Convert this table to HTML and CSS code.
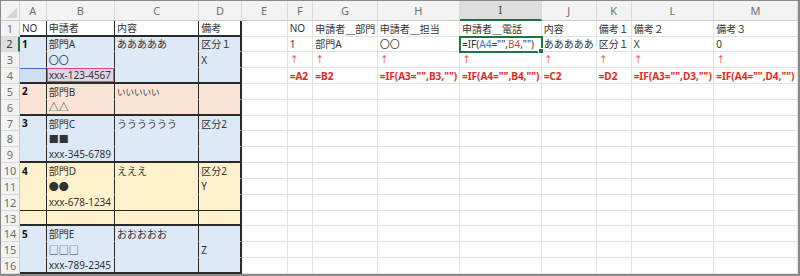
FILE: index.html
```html
<!DOCTYPE html>
<html lang="ja">
<head>
<meta charset="utf-8">
<link rel="stylesheet" href="styles.css">
</head>
<body>
<div class="frame">
<div class="sheet">
  <!-- column headers -->
  <div class="corner"><div class="tri"></div></div>
  <div class="ch">A</div><div class="ch">B</div><div class="ch">C</div><div class="ch">D</div><div class="ch">E</div><div class="ch">F</div><div class="ch">G</div><div class="ch">H</div><div class="ch sel">I</div><div class="ch">J</div><div class="ch">K</div><div class="ch">L</div><div class="ch">M</div>

  <!-- row 1 -->
  <div class="rh">1</div>
  <div class="c bR bB2">NO</div>
  <div class="c bR bB2">申請者</div>
  <div class="c bR bB2">内容</div>
  <div class="c bR2 bB2">備考</div>
  <div class="c"></div>
  <div class="c">NO</div>
  <div class="c">申請者＿部門</div>
  <div class="c">申請者＿担当</div>
  <div class="c">申請者＿電話</div>
  <div class="c">内容</div>
  <div class="c">備考１</div>
  <div class="c">備考２</div>
  <div class="c">備考３</div>

  <!-- row 2 -->
  <div class="rh rsel">2</div>
  <div class="c fb bR b">1</div>
  <div class="c fb bR">部門A</div>
  <div class="c fb bR">あああああ</div>
  <div class="c fb bR2">区分１</div>
  <div class="c"></div>
  <div class="c">1</div>
  <div class="c">部門A</div>
  <div class="c">〇〇</div>
  <div class="c act">=IF(<span class="rb">A4</span>="",<span class="rr">B4</span>,"")</div>
  <div class="c">あああああ</div>
  <div class="c">区分１</div>
  <div class="c">X</div>
  <div class="c">0</div>

  <!-- row 3 -->
  <div class="rh">3</div>
  <div class="c fb bR"></div>
  <div class="c fb bR">〇〇</div>
  <div class="c fb bR"></div>
  <div class="c fb bR2">X</div>
  <div class="c"></div>
  <div class="c arr">↑</div>
  <div class="c arr">↑</div>
  <div class="c arr">↑</div>
  <div class="c arr">↑</div>
  <div class="c arr">↑</div>
  <div class="c arr">↑</div>
  <div class="c arr">↑</div>
  <div class="c arr">↑</div>

  <!-- row 4 -->
  <div class="rh">4</div>
  <div class="c fb bR bB2 hiA"></div>
  <div class="c fb bR bB2 hiB">xxx-123-4567</div>
  <div class="c fb bR bB2"></div>
  <div class="c fb bR2 bB2"></div>
  <div class="c"></div>
  <div class="c red">=A2</div>
  <div class="c red">=B2</div>
  <div class="c red">=IF(A3="",B3,"")</div>
  <div class="c red">=IF(A4="",B4,"")</div>
  <div class="c red">=C2</div>
  <div class="c red">=D2</div>
  <div class="c red">=IF(A3="",D3,"")</div>
  <div class="c red">=IF(A4="",D4,"")</div>

  <!-- row 5 -->
  <div class="rh">5</div>
  <div class="c fo bR b">2</div>
  <div class="c fo bR">部門B</div>
  <div class="c fo bR sm">いいいいい</div>
  <div class="c fo bR2"></div>
  <div class="c"></div><div class="c"></div><div class="c"></div><div class="c"></div><div class="c"></div><div class="c"></div><div class="c"></div><div class="c"></div><div class="c"></div>

  <!-- row 6 -->
  <div class="rh">6</div>
  <div class="c fo bR bB2"></div>
  <div class="c fo bR bB2">△△</div>
  <div class="c fo bR bB2"></div>
  <div class="c fo bR2 bB2"></div>
  <div class="c"></div><div class="c"></div><div class="c"></div><div class="c"></div><div class="c"></div><div class="c"></div><div class="c"></div><div class="c"></div><div class="c"></div>

  <!-- row 7 -->
  <div class="rh">7</div>
  <div class="c fb bR b">3</div>
  <div class="c fb bR">部門C</div>
  <div class="c fb bR">うううううう</div>
  <div class="c fb bR2">区分2</div>
  <div class="c"></div><div class="c"></div><div class="c"></div><div class="c"></div><div class="c"></div><div class="c"></div><div class="c"></div><div class="c"></div><div class="c"></div>

  <!-- row 8 -->
  <div class="rh">8</div>
  <div class="c fb bR"></div>
  <div class="c fb bR">■■</div>
  <div class="c fb bR"></div>
  <div class="c fb bR2"></div>
  <div class="c"></div><div class="c"></div><div class="c"></div><div class="c"></div><div class="c"></div><div class="c"></div><div class="c"></div><div class="c"></div><div class="c"></div>

  <!-- row 9 -->
  <div class="rh">9</div>
  <div class="c fb bR bB2"></div>
  <div class="c fb bR bB2">xxx-345-6789</div>
  <div class="c fb bR bB2"></div>
  <div class="c fb bR2 bB2"></div>
  <div class="c"></div><div class="c"></div><div class="c"></div><div class="c"></div><div class="c"></div><div class="c"></div><div class="c"></div><div class="c"></div><div class="c"></div>

  <!-- row 10 -->
  <div class="rh">10</div>
  <div class="c fy bR b">4</div>
  <div class="c fy bR">部門D</div>
  <div class="c fy bR">えええ</div>
  <div class="c fy bR2">区分2</div>
  <div class="c"></div><div class="c"></div><div class="c"></div><div class="c"></div><div class="c"></div><div class="c"></div><div class="c"></div><div class="c"></div><div class="c"></div>

  <!-- row 11 -->
  <div class="rh">11</div>
  <div class="c fy bR"></div>
  <div class="c fy bR">●●</div>
  <div class="c fy bR"></div>
  <div class="c fy bR2">Y</div>
  <div class="c"></div><div class="c"></div><div class="c"></div><div class="c"></div><div class="c"></div><div class="c"></div><div class="c"></div><div class="c"></div><div class="c"></div>

  <!-- row 12 -->
  <div class="rh">12</div>
  <div class="c fy bR bB1"></div>
  <div class="c fy bR bB1">xxx-678-1234</div>
  <div class="c fy bR bB1"></div>
  <div class="c fy bR2 bB1"></div>
  <div class="c"></div><div class="c"></div><div class="c"></div><div class="c"></div><div class="c"></div><div class="c"></div><div class="c"></div><div class="c"></div><div class="c"></div>

  <!-- row 13 -->
  <div class="rh">13</div>
  <div class="c fy bR bB2"></div>
  <div class="c fy bR bB2"></div>
  <div class="c fy bR bB2"></div>
  <div class="c fy bR2 bB2"></div>
  <div class="c"></div><div class="c"></div><div class="c"></div><div class="c"></div><div class="c"></div><div class="c"></div><div class="c"></div><div class="c"></div><div class="c"></div>

  <!-- row 14 -->
  <div class="rh">14</div>
  <div class="c fb bR b">5</div>
  <div class="c fb bR">部門E</div>
  <div class="c fb bR">おおおおお</div>
  <div class="c fb bR2"></div>
  <div class="c"></div><div class="c"></div><div class="c"></div><div class="c"></div><div class="c"></div><div class="c"></div><div class="c"></div><div class="c"></div><div class="c"></div>

  <!-- row 15 -->
  <div class="rh">15</div>
  <div class="c fb bR"></div>
  <div class="c fb bR">□□□</div>
  <div class="c fb bR"></div>
  <div class="c fb bR2">Z</div>
  <div class="c"></div><div class="c"></div><div class="c"></div><div class="c"></div><div class="c"></div><div class="c"></div><div class="c"></div><div class="c"></div><div class="c"></div>

  <!-- row 16 -->
  <div class="rh">16</div>
  <div class="c fb bR bB2"></div>
  <div class="c fb bR bB2">xxx-789-2345</div>
  <div class="c fb bR bB2"></div>
  <div class="c fb bR2 bB2"></div>
  <div class="c"></div><div class="c"></div><div class="c"></div><div class="c"></div><div class="c"></div><div class="c"></div><div class="c"></div><div class="c"></div><div class="c"></div>
</div>
</div>
</body>
</html>
```

FILE: styles.css
```css
html, body {
  margin: 0;
  padding: 0;
  background: #ffffff;
}

.frame {
  width: 800px;
  height: 276px;
  box-sizing: border-box;
  border: 1px solid #8a8a8a;
  border-right-width: 2px;
  border-bottom-width: 2px;
  overflow: hidden;
  background: #ffffff;
}

.sheet {
  display: grid;
  grid-template-columns: 19px 26.7px 68.3px 84.3px 42.4px 46px 25.6px 64.4px 82.3px 81.7px 55px 35px 82.6px 83.7px;
  grid-template-rows: 19.7px repeat(16, 15.83px);
  font-family: "Noto Sans", "Noto Sans CJK JP", sans-serif;
  font-size: 10px;
  color: #333333;
}

.corner {
  background: #f3f3f3;
  border-right: 1px solid #d4d4d4;
  border-bottom: 1px solid #c8c8c8;
  box-sizing: border-box;
  display: flex;
  justify-content: flex-end;
  align-items: flex-end;
  padding: 0 2px 2px 0;
}

.tri {
  width: 11px;
  height: 11px;
  background: linear-gradient(to top left, #d6d6d6 50%, rgba(214, 214, 214, 0) 50%);
}

.ch {
  background: #f3f3f3;
  border-right: 1px solid #dadada;
  border-bottom: 1px solid #c8c8c8;
  box-sizing: border-box;
  display: flex;
  align-items: center;
  justify-content: center;
  color: #6e6e6e;
  font-size: 11px;
}

.ch.sel {
  background: #dedede;
  color: #3f3f3f;
  border-bottom: 2px solid #217346;
}

.rh {
  background: #f3f3f3;
  border-right: 1px solid #c8c8c8;
  border-bottom: 1px solid #dadada;
  box-sizing: border-box;
  display: flex;
  align-items: center;
  justify-content: center;
  color: #6e6e6e;
  font-size: 11px;
}

.rh.rsel {
  background: #dedede;
  color: #3f3f3f;
  border-right: 2px solid #217346;
}

.c {
  box-sizing: border-box;
  border-right: 1px solid #e2e2e2;
  border-bottom: 1px solid #e2e2e2;
  display: flex;
  align-items: center;
  padding-left: 2px;
  white-space: nowrap;
  overflow: hidden;
  position: relative;
}

.fb { background: #dde9f6; border-color: #dde9f6; }
.fo { background: #fbe3d6; border-color: #fbe3d6; }
.fy { background: #fff1cb; border-color: #fff1cb; }

.bR { border-right: 1px solid #2a2a2a; }
.bR2 { border-right: 2px solid #2a2a2a; }
.bB2 { border-bottom: 2px solid #2a2a2a; }
.bB1 { border-bottom: 1px solid #2a2a2a; }

.b {
  font-weight: 700;
  color: #111111;
}

.sm {
  font-size: 8.5px;
}

.arr {
  color: #e0423c;
  font-size: 9px;
}

.red {
  color: #e02a26;
  font-weight: 700;
}

.hiA {
  background: #cfdff2;
  box-shadow: inset 0 1px 0 #3d6fc4;
}

.hiB {
  background: #dcd6e7;
  box-shadow: inset 0 0 0 1px #e0506a;
}

.act {
  overflow: visible;
  outline: 2px solid #217346;
  outline-offset: -1px;
  z-index: 2;
  color: #333333;
}

.act::after {
  content: "";
  position: absolute;
  right: -3px;
  bottom: -3px;
  width: 4px;
  height: 4px;
  background: #217346;
  border: 1px solid #ffffff;
}

.rb { color: #4472c4; }
.rr { color: #c0504d; }
```
